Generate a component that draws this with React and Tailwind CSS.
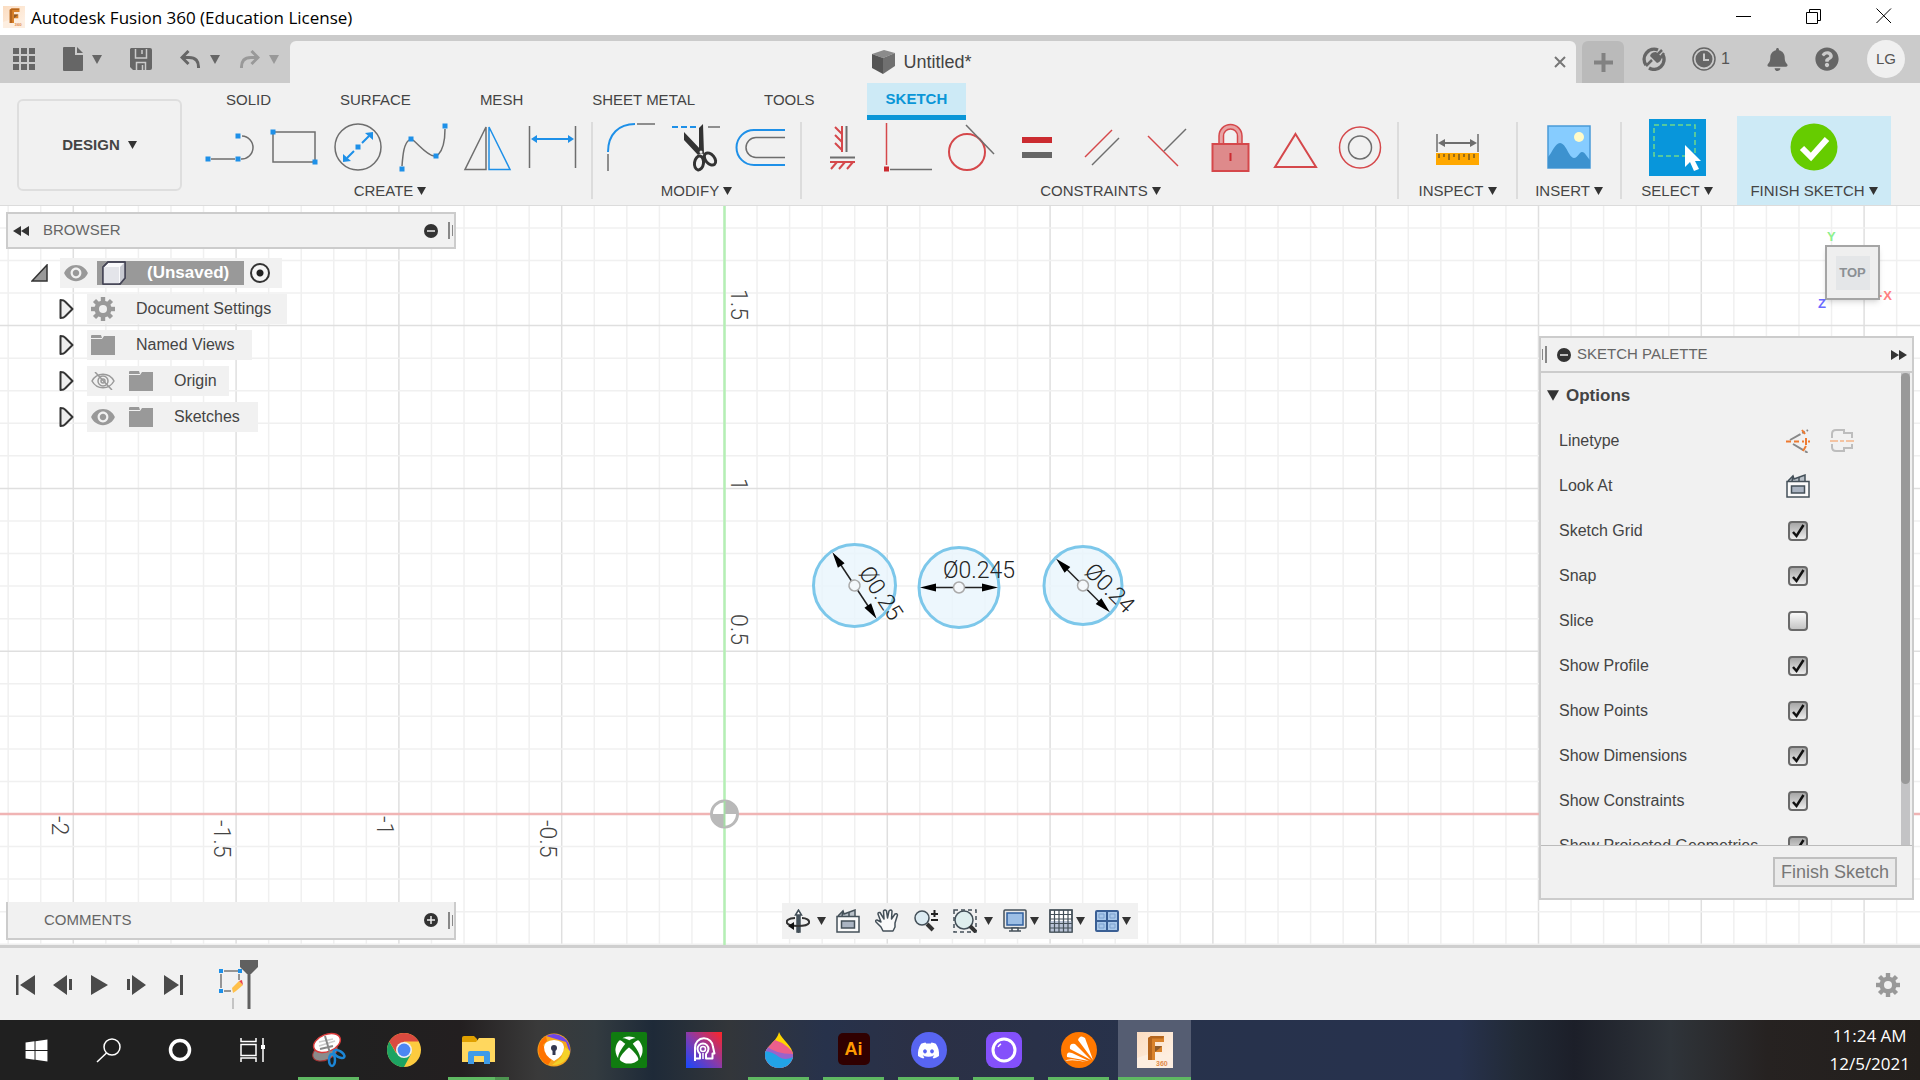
import React from "react";
import { FaWindows, FaXbox, FaDiscord, FaBell, FaQuestionCircle, FaRegHandPaper } from "react-icons/fa";
import { MdVisibility } from "react-icons/md";

const BLUE = "#1e90e8";
const RED = "#d5484b";
const DARK = "#6e6e6e";

function Caret({ className = "text-[#333]", size = 9 }) {
  return (
    <svg width={size} height={size - 1} viewBox="0 0 9 8" className={className} aria-hidden="true">
      <path d="M0 0H9L4.5 8Z" fill="currentColor" />
    </svg>
  );
}

function Gear({ size = 24 }) {
  return (
    <svg width={size} height={size} viewBox="0 0 24 24" fill="#999" aria-hidden="true">
      {[0, 45, 90, 135].map((a) => (
        <rect key={a} x="9.8" y="0" width="4.4" height="24" transform={`rotate(${a} 12 12)`} />
      ))}
      <circle cx="12" cy="12" r="8.6" />
      <circle cx="12" cy="12" r="4" fill="#f0f0f0" />
    </svg>
  );
}

/* ---------- title bar ---------- */

function FusionMark({ size }) {
  return (
    <svg width={size} height={size} viewBox="0 0 36 36" aria-hidden="true">
      <defs>
        <linearGradient id="fbg" x1="0" y1="0" x2="1" y2="1">
          <stop offset="0" stopColor="#fbdcc0" />
          <stop offset="1" stopColor="#fff4ea" />
        </linearGradient>
      </defs>
      <rect width="36" height="36" fill="url(#fbg)" />
      <path d="M0 26L18 20L36 26V36H0Z" fill="#fdeee0" />
      <path d="M11 6L14 4H27V10H18V14H25V20H18V28H11Z" fill="#d9822b" />
      <path d="M11 6L14 4H27L26 6.500H15V28H11Z" fill="#b5651d" />
      <path d="M18 14H25L23 16L18 20Z" fill="#8d5a2b" />
      <text x="19" y="33.500" fontSize="7" fontWeight="700" fill="#e08a4a" fontFamily="Liberation Sans, sans-serif">360</text>
    </svg>
  );
}

function TitleBar() {
  return (
    <header className="flex h-[35px] items-start bg-white pl-[3px] text-black">
      <div className="mt-[6px]"><FusionMark size={22} /></div>
      <h1 className="ml-[6px] mt-[6px] flex-1 font-['Open_Sans','Noto_Sans',sans-serif] text-[17px] leading-6">
        Autodesk Fusion 360 (Education License)
      </h1>
      <div className="flex h-8 items-center gap-6 pr-[13px]">
        <button aria-label="Minimize" className="grid w-[46px] place-items-center">
          <svg width="16" height="16"><path d="M0 8.500H15" stroke="#000" /></svg>
        </button>
        <button aria-label="Restore" className="grid w-[46px] place-items-center">
          <svg width="16" height="16" fill="none" stroke="#000"><path d="M.5 4.500H11.500V15.500H.5Z M3.500 4V1.500H14.500V12.500H12" /></svg>
        </button>
        <button aria-label="Close" className="grid w-[46px] place-items-center">
          <svg width="16" height="16" stroke="#000"><path d="M.5 .5L15 15M15 .5L.5 15" /></svg>
        </button>
      </div>
    </header>
  );
}

/* ---------- tab strip ---------- */

function TabStrip() {
  return (
    <div className="flex h-12 bg-[#cbcbcb] text-[#666]">
      <div className="flex w-[290px] shrink-0 items-center pl-[13px]">
        <button aria-label="Data panel">
          <svg width="22" height="22" fill="currentColor">
            {[0, 8, 16].map((x) => [0, 8, 16].map((y) => <rect key={x + "-" + y} x={x} y={y} width="6" height="6" />))}
          </svg>
        </button>
        <button aria-label="File" className="ml-7 flex items-center gap-[9px]">
          <svg width="20" height="24" fill="currentColor"><path d="M0 1Q0 0 1 0H12V8H20V23Q20 24 19 24H1Q0 24 0 23Z" /><path d="M14 0L20 6H14Z" /></svg>
          <Caret className="text-[#666]" size={10} />
        </button>
        <button aria-label="Save" className="ml-7">
          <svg width="22" height="22"><path d="M1 0H20Q22 0 22 2V20Q22 22 20 22H3L0 19V1Z" fill="currentColor" /><path d="M5.500 1V10H16.500V1M12 2V6M6.500 22V14.500H15.500V22M12.500 17V22" fill="none" stroke="#cbcbcb" strokeWidth="1.500" /></svg>
        </button>
        <button aria-label="Undo" className="ml-7 flex items-center gap-[9px]">
          <svg width="21" height="18" fill="none" stroke="currentColor" strokeWidth="3"><path d="M8.500 1L2 7.500L8.500 14M2 7.500H9Q19 7.500 18.500 18" /></svg>
          <Caret className="text-[#666]" size={10} />
        </button>
        <button aria-label="Redo" className="ml-[19px] flex items-center gap-[9px] text-[#999]">
          <svg width="21" height="18" fill="none" stroke="currentColor" strokeWidth="3"><path d="M12.500 1L19 7.500L12.500 14M19 7.500H12Q2 7.500 2.500 18" /></svg>
          <Caret className="text-[#999]" size={10} />
        </button>
      </div>
      <div className="mt-[6px] flex flex-1 items-center rounded-t-md bg-[#f1f1f1]">
        <div className="flex flex-1 items-center justify-center gap-[7px] text-lg text-[#444]">
          <svg width="25" height="24" viewBox="0 0 25 24"><path d="M1 4L13 0L24 3L12 8Z" fill="#8b8b8b" /><path d="M1 4L12 8V24L1 18Z" fill="#555" /><path d="M12 8L24 3V16L12 24Z" fill="#707070" /></svg>
          Untitled*
        </div>
        <button aria-label="Close document" className="mr-[9px] grid h-6 w-[14px] place-items-center">
          <svg width="12" height="12" stroke="#777" strokeWidth="2"><path d="M1 1L11 11M11 1L1 11" /></svg>
        </button>
      </div>
      <button aria-label="New design" className="ml-[6px] mt-[6px] grid w-[42px] place-items-center rounded-t-md bg-[#bababa]">
        <svg width="19" height="19" stroke="#828282" strokeWidth="4"><path d="M9.500 0V19M0 9.500H19" /></svg>
      </button>
      <div className="flex w-[296px] shrink-0 items-center pl-[18px]">
        <button aria-label="Extensions">
          <svg width="24" height="24" fill="none" stroke="currentColor"><path d="M4 18A10 10 0 0 1 16 3M21 8A10 10 0 0 1 7 21" strokeWidth="3.500" /><path d="M4 19L10 13" strokeWidth="2.500" /><path d="M8 9L15 16Q19 15 20 10L14 5Q9 5 8 9Z" fill="currentColor" stroke="none" /><path d="M15 8L20 3M18 11L22 6" strokeWidth="2.500" /></svg>
        </button>
        <button className="ml-[26px] flex items-center gap-1 text-base text-[#555]">
          <svg width="25" height="24"><circle cx="12" cy="12" r="11" fill="none" stroke="#666" strokeWidth="1.500" /><circle cx="12" cy="12" r="8.500" fill="#666" /><path d="M12 6.500V13H17" stroke="#cbcbcb" strokeWidth="2" fill="none" /></svg>
          1
        </button>
        <button aria-label="Notifications" className="ml-9"><FaBell size={23} /></button>
        <button aria-label="Help" className="ml-[26px]"><FaQuestionCircle size={24} /></button>
        <button className="ml-7 grid size-[38px] place-items-center rounded-full bg-[#f0f0f0] text-[15px] text-[#555]">LG</button>
      </div>
    </div>
  );
}

/* ---------- ribbon ---------- */

function Dot({ x, y }) {
  return <rect x={x - 2.5} y={y - 2.5} width="5" height="5" fill={BLUE} stroke="none" />;
}

const createIcons = {
  Line: <><path d="M9 36H33M39 36A11.500 11.500 0 0 0 40 13" stroke={DARK} /><Dot x={6} y={36} /><Dot x={36} y={36} /><Dot x={36} y={13} /></>,
  Rectangle: <><rect x="6" y="9" width="42" height="30" stroke={DARK} /><Dot x={6} y={9} /><Dot x={48} y={39} /></>,
  Circle: <><circle cx="26" cy="24" r="23" stroke={DARK} /><path d="M30 20L37 13M22 28L15 35" stroke={BLUE} strokeWidth="2" /><path d="M41 9V17L33 10ZM11 39V31L19 38Z" fill={BLUE} /><Dot x={26} y={24} /></>,
  Spline: <><path d="M5 43C6 30 7 21 12 17M16 17C24 24 30 32 37 33M41 32C47 26 48 16 48 6" stroke={DARK} /><Dot x={5} y={46} /><Dot x={14} y={16} /><Dot x={39} y={33} /><Dot x={48} y={3} /></>,
  Mirror: <><path d="M24 4V46.500H3Z" stroke={DARK} /><path d="M27 4V46.500H48Z" stroke={BLUE} /></>,
  "Sketch Dimension": <><path d="M2.500 3V45M48.500 3V45" stroke={DARK} /><path d="M8 16H43" stroke={BLUE} strokeWidth="2" /><path d="M4 16L10 12V20ZM47 16L41 12V20Z" fill={BLUE} /></>,
};

const modifyIcons = {
  Fillet: <><path d="M2 31V48M31 1H49" stroke={DARK} /><path d="M2 29C2 11 13 1 29 1" stroke={BLUE} strokeWidth="2" /></>,
  Trim: <><path d="M1 4H26" stroke={BLUE} strokeWidth="2" strokeDasharray="6 3" /><path d="M37 4H49" stroke={DARK} /><path d="M13 9V17L27 32L32 29ZM32 1L28 5V30L33 31Z" fill="#333" /><ellipse cx="28" cy="40" rx="4.500" ry="7" transform="rotate(8 28 40)" stroke="#333" strokeWidth="3" /><ellipse cx="39" cy="36" rx="4.500" ry="7" transform="rotate(-40 39 36)" stroke="#333" strokeWidth="3" /><circle cx="30" cy="29" r="1.500" fill="#eee" /></>,
  Offset: <><path d="M49 7H18A17.500 17.500 0 0 0 18 42H49" stroke={BLUE} strokeWidth="2" /><path d="M49 14.500H20A10 10 0 0 0 20 34.500H49" stroke={DARK} /></>,
};

const constraintIcons = {
  "Horizontal/Vertical": <><path d="M27 3V29M15 39H40" stroke={RED} strokeWidth="2" /><path d="M31.500 3V29M15 34.500H40" stroke={DARK} strokeWidth="2" /><path d="M27 11L20 4M27 19L20 12M27 27L20 20M22 39L16 46M30 39L24 46M38 39L32 46" stroke={RED} strokeWidth="2" /></>,
  Coincident: <><path d="M6.500 0V42" stroke={RED} /><rect x="4" y="43.500" width="5" height="5" fill="#cb2b30" /><path d="M10 46.500H52" stroke={DARK} /></>,
  Tangent: <><circle cx="22" cy="29" r="18" stroke={RED} strokeWidth="2" /><path d="M21 2L49 31" stroke={DARK} /></>,
  Equal: <><rect x="12" y="14" width="30" height="6" fill="#cb2b30" /><rect x="12" y="29" width="30" height="6" fill="#666" /></>,
  Parallel: <><path d="M10 34L37 7" stroke={RED} /><path d="M17 42L44 15" stroke={DARK} /></>,
  Perpendicular: <><path d="M8 13L38 43" stroke={RED} /><path d="M24 28L46 6" stroke={DARK} /></>,
  "Fix/UnFix": <><path d="M14 21V13A11.500 11.500 0 0 1 37 13V21H32.500V13A7 7 0 0 0 18.500 13V21Z" fill="#e8a4a5" stroke={RED} /><rect x="7.500" y="21" width="36" height="27" fill="#de8a8b" stroke={RED} strokeWidth="2" /><path d="M25.500 30V38" stroke="#cb2b30" strokeWidth="2" /></>,
  MidPoint: <path d="M25.500 11L46 44H5Z" stroke={RED} strokeWidth="2" />,
  Concentric: <><circle cx="25" cy="24.500" r="20.500" stroke={RED} /><circle cx="25" cy="24.500" r="11.500" stroke={DARK} /></>,
};

function MenuLabel({ children }) {
  return (
    <button className="flex h-7 items-center gap-1 pb-px text-[15px] leading-none whitespace-nowrap text-[#444]">
      {children}
      <Caret />
    </button>
  );
}

function ToolGroup({ label, icons }) {
  return (
    <section className="flex flex-col items-center">
      <div className="flex pb-[6px]">
        {Object.entries(icons).map(([name, art]) => (
          <button key={name} aria-label={name} className="grid h-12 w-[65px] place-items-center">
            <svg width="52" height="48" fill="none" strokeWidth="1.500" className="overflow-visible">{art}</svg>
          </button>
        ))}
      </div>
      <MenuLabel>{label}</MenuLabel>
    </section>
  );
}

function Divider() {
  return <div className="mb-[6px] h-[77px] w-[2px] shrink-0 bg-[#dcdcdc]" />;
}

function Ribbon() {
  const tabs = ["SOLID", "SURFACE", "MESH", "SHEET METAL", "TOOLS"];
  return (
    <div className="flex h-[123px] items-end border-b border-[#dcdcdc] bg-[#f1f1f1] text-[#444]">
      <button className="mb-[14px] ml-[17px] mr-[13px] flex h-[92px] w-[165px] shrink-0 items-center justify-center gap-2 rounded-md border-2 border-[#dedede] text-[15px] font-bold text-[#444]">
        DESIGN <Caret />
      </button>
      <div className="flex h-full flex-col justify-between">
        <nav className="flex h-[37px] items-start gap-[35px] pl-[14px] text-[15px]">
          {tabs.map((t) => (
            <button key={t} className="px-[17px] leading-[34px]">{t}</button>
          ))}
          <button className="border-b-[5px] border-[#0a96d7] bg-[#cdeaf6] px-[19px] font-bold leading-[32px] text-[#0a96d7]">SKETCH</button>
        </nav>
        <div className="flex items-end">
          <ToolGroup label="CREATE" icons={createIcons} />
          <div className="px-[6px]"><Divider /></div>
          <ToolGroup label="MODIFY" icons={modifyIcons} />
          <div className="px-[6px]"><Divider /></div>
          <ToolGroup label="CONSTRAINTS" icons={constraintIcons} />
        </div>
      </div>
      <div className="pl-1"><Divider /></div>
      <section className="flex w-[117px] flex-col items-center">
        <button aria-label="Measure" className="mb-[10px]">
          <svg width="43" height="33" className="overflow-visible"><path d="M1 0V18M42 0V18" stroke={DARK} strokeWidth="1.500" /><path d="M5 9H38" stroke={DARK} strokeWidth="2" /><path d="M2 9L9 5V13ZM41 9L34 5V13Z" fill={DARK} /><rect x="0" y="19" width="43" height="12" fill="#ffa800" /><path d="M3 20V24M8 20V23M13 20V26M18 20V23M23 20V26M28 20V23M33 20V26M38 20V24" stroke="#7a5a20" strokeWidth="1.500" /></svg>
        </button>
        <MenuLabel>INSPECT</MenuLabel>
      </section>
      <Divider />
      <section className="flex w-[102px] flex-col items-center">
        <button aria-label="Insert image" className="mb-2">
          <svg width="44" height="44"><rect x="1" y="1" width="42" height="42" fill="#86ccff" stroke="#4a9ad8" strokeWidth="1.500" /><path d="M1 32C5 28 8 18 13 18C19 18 22 33 27 33C31 33 32 27 35 27C38 27 40 32 43 35V43H1Z" fill="#3d92cf" /><circle cx="32" cy="12" r="5" fill="#fffbc8" /></svg>
        </button>
        <MenuLabel>INSERT</MenuLabel>
      </section>
      <Divider />
      <section className="mr-[5px] flex w-[110px] flex-col items-center">
        <button aria-label="Select" className="mb-px bg-[#0896db]">
          <svg width="57" height="57"><rect x="5" y="6" width="41" height="31" fill="none" stroke="#6fd98a" strokeWidth="1.500" strokeDasharray="5 3" /><path d="M36 26V48L41 43L45 52L50 50L46 42H52Z" fill="#fff" /></svg>
        </button>
        <MenuLabel>SELECT</MenuLabel>
      </section>
      <section className="flex h-[89px] w-[154px] flex-col items-center justify-end bg-[#cdeaf6]">
        <button aria-label="Finish sketch" className="mb-[6px]">
          <svg width="48" height="48"><circle cx="24" cy="24" r="23.500" fill="#66cc00" /><path d="M12 25L21 34L37 16" fill="none" stroke="#fff" strokeWidth="6" /></svg>
        </button>
        <MenuLabel>FINISH SKETCH</MenuLabel>
      </section>
    </div>
  );
}

/* ---------- sketch drawing ---------- */

const STEP = 32.56;
const OX = 724.5;
const OY = 814;

function Dimension({ cx, cy, r, angle, label, tx, ty }) {
  return (
    <g>
      <circle cx={cx} cy={cy} r={r} fill="#e9f5fc" fillOpacity="0.8" stroke="#7cc7ea" strokeWidth="3" />
      <g transform={`translate(${cx} ${cy}) rotate(${angle})`}>
        <path d={`M${-r + 8} 0H${r - 8}`} stroke="#222" strokeWidth="1.500" />
        <path d={`M${-r + 1} 0L${-r + 17} -4V4ZM${r - 1} 0L${r - 17} -4V4Z`} fill="#000" />
        <circle r="5.500" fill="#f4f8fb" stroke="#aaa" strokeWidth="1.500" />
      </g>
      <text transform={`translate(${tx} ${ty}) rotate(${angle})`} textAnchor="middle" y="8" fontSize="23" fontWeight="300" fill="#222">{label}</text>
    </g>
  );
}

function AxisLabel({ x, y, children }) {
  return <text transform={`translate(${x} ${y}) rotate(90)`} fontSize="23" fontWeight="300" fill="#444">{children}</text>;
}

function SketchCanvas() {
  const xs = Array.from({ length: 110 }, (_, i) => i - 22);
  const ys = Array.from({ length: 70 }, (_, i) => i - 18);
  return (
    <svg className="absolute inset-0 size-full bg-white font-[Roboto,'Liberation_Sans',sans-serif]" aria-label="Sketch canvas">
      <g transform="translate(0 -206)">
        {xs.map((i) => <path key={i} d={`M${OX + i * STEP} 0V3000`} stroke={i % 5 ? "#f0f0f0" : "#dfdfdf"} strokeWidth="1.500" />)}
        {ys.map((i) => <path key={i} d={`M0 ${OY + i * STEP}H5000`} stroke={i % 5 ? "#f0f0f0" : "#dfdfdf"} strokeWidth="1.500" />)}
        <path d={`M0 ${OY}H5000`} stroke="#f0b4b4" strokeWidth="2.500" />
        <path d={`M${OX} 0V3000`} stroke="#b4efb4" strokeWidth="2.500" />
        <AxisLabel x={731} y={289}>1.5</AxisLabel>
        <AxisLabel x={731} y={478}>1</AxisLabel>
        <AxisLabel x={731} y={614}>0.5</AxisLabel>
        <AxisLabel x={52} y={816}>-2</AxisLabel>
        <AxisLabel x={214} y={820}>-1.5</AxisLabel>
        <AxisLabel x={377} y={816}>-1</AxisLabel>
        <AxisLabel x={540} y={820}>-0.5</AxisLabel>
        <circle cx={OX} cy={OY} r="13" fill="#fff" stroke="#b9b9b9" strokeWidth="3" />
        <path d={`M${OX} ${OY}V${OY - 13}A13 13 0 0 1 ${OX + 13} ${OY}ZM${OX} ${OY}V${OY + 13}A13 13 0 0 1 ${OX - 13} ${OY}Z`} fill="#b9b9b9" />
        <path d={`M${OX} ${OY - 13}V${OY + 13}`} stroke="#a4dca4" strokeWidth="2" />
        <Dimension cx={854.5} cy={585.5} r={41} angle={56.5} label="Ø0.25" tx={881} ty={593} />
        <Dimension cx={959} cy={587.5} r={40} angle={0} label="Ø0.245" tx={979} ty={570} />
        <Dimension cx={1083} cy={585.5} r={39} angle={45} label="Ø0.24" tx={1110} ty={588} />
      </g>
    </svg>
  );
}

/* ---------- browser ---------- */

function MinusPlus({ plus }) {
  return (
    <svg width="14" height="14"><circle cx="7" cy="7" r="7" fill="#333" /><path d={plus ? "M3 7H11M7 3V11" : "M3 7H11"} stroke="#eee" strokeWidth="1.500" /></svg>
  );
}

function Grip() {
  return <span className="flex items-center gap-[2px]"><span className="h-[17px] w-[2px] bg-[#888]" /><span className="h-[11px] w-px bg-[#888]" /></span>;
}

function Folder() {
  return <svg width="24" height="20" fill="#999"><path d="M0 1Q0 0 1 0H10L11 3H0ZM0 4H11L13 1H24V20H0Z" /></svg>;
}

function Eye() {
  return <MdVisibility size={26} color="#999" className="-mx-px" />;
}

function EyeOff() {
  return (
    <svg width="24" height="18" fill="none" stroke="#999" strokeWidth="1.500"><path d="M1 9C6 0 18 0 23 9C18 18 6 18 1 9ZM4 0L21 18" /><circle cx="12" cy="9" r="5" /><circle cx="12" cy="9" r="2" /></svg>
  );
}

function Expander() {
  return <svg width="15" height="20"><path d="M1.500 1Q5 1 6 2.500L13.500 10L6 17.500Q5 19 1.500 19Z" fill="#eee" stroke="#333" strokeWidth="2" strokeLinejoin="round" /></svg>;
}

function Browser() {
  const rows = [
    { label: "Document Settings", icons: <Gear />, pr: "pr-4" },
    { label: "Named Views", icons: <Folder />, pr: "pr-[18px]" },
    { label: "Origin", icons: <><EyeOff /><Folder /></>, pr: "pr-3" },
    { label: "Sketches", icons: <><Eye /><Folder /></>, pr: "pr-[18px]" },
  ];
  return (
    <div>
      <div className="flex h-[37px] w-[450px] items-center border-2 border-[#ccc] bg-[#f1f1f1] pl-[5px] pr-px text-[15px] text-[#666]">
        <button aria-label="Collapse browser"><svg width="16" height="10" fill="#333"><path d="M0 5L8 0V10ZM8 5L16 0V10Z" /></svg></button>
        <h2 className="ml-[14px] flex-1">BROWSER</h2>
        <button aria-label="Minimize browser" className="mr-[10px]"><MinusPlus /></button>
        <Grip />
      </div>
      <ul className="mt-[9px] flex flex-col gap-[6px] text-base text-[#444]">
        <li className="flex h-[30px] items-center pl-[25px]">
          <button aria-label="Collapse document" className="mr-3">
            <svg width="17" height="18"><path d="M1 17L16 1V17Z" fill="#999" stroke="#333" strokeWidth="1.500" /></svg>
          </button>
          <span className="flex h-full items-center bg-[#f1f1f1] pl-1 pr-3">
            <Eye />
            <span className="ml-[9px] flex h-6 items-center bg-[#999] pl-[5px] pr-[15px] text-[17px] font-bold text-white">
              <svg width="24" height="24" className="mr-[21px]" stroke="#445" strokeWidth="1.500" strokeLinejoin="round"><path d="M1 6L6 1H23V17L18 23H1Z" fill="#fafafc" /><path d="M1 6H17V23H1Z" fill="#e4e5ea" stroke="none" /><path d="M18 6L23 1V17L18 23Z" fill="#c8cad2" stroke="none" /><path d="M1 6L6 1H23V17L18 23H1Z" fill="none" /></svg>
              (Unsaved)
            </span>
            <input type="radio" defaultChecked aria-label="Activate component" className="ml-[6px] size-5 appearance-none rounded-full border-2 border-[#333] bg-[radial-gradient(circle,#222_3px,#f6f6f6_4px)]" />
          </span>
        </li>
        {rows.map((r) => (
          <li key={r.label} className="flex h-[30px] items-center pl-[53px]">
            <button aria-label={"Expand " + r.label} className="mr-[13px]"><Expander /></button>
            <span className={"flex h-full items-center bg-[#f1f1f1] pl-1 " + r.pr}>
              <span className="mr-[21px] flex items-center gap-[14px]">{r.icons}</span>
              {r.label}
            </span>
          </li>
        ))}
      </ul>
    </div>
  );
}

function Comments() {
  return (
    <div className="flex h-[38px] w-[450px] items-center border-2 border-t-0 border-[#ccc] bg-[#f1f1f1] pl-9 pr-px text-[15px] text-[#666]">
      <h2 className="flex-1">COMMENTS</h2>
      <button aria-label="Open comments" className="mr-[10px]"><MinusPlus plus /></button>
      <Grip />
    </div>
  );
}

/* ---------- navigation bar ---------- */

function LookAtIcon() {
  return (
    <svg width="24" height="24" fill="none" stroke="#445059" strokeWidth="1.500"><path d="M2 7L7 2L8 5L19 1V7" fill="#b8c0c8" /><path d="M7 2L6 7M13 3V7" /><rect x="1" y="7.500" width="22" height="15.500" fill="#fafafa" /><rect x="5.500" y="12" width="13" height="7" fill="#aab4c2" /></svg>
  );
}

function NavBar() {
  const S = { width: 24, height: 24, fill: "none", stroke: "#445059", strokeWidth: 1.5 };
  const items = [
    { name: "Orbit", caret: true, wide: true, art: <svg {...S}><path d="M12.500 24V7M9.500 6L12.500 1L15.500 6ZM11 7H14V23H11Z" fill="#fff" /><path d="M9 9C2 9 0 12 1 14C3 18 21 18 23 14C24 11 20 9 16 9" stroke="#333" strokeWidth="2" /><path d="M8 13V21L2 17Z" fill="#111" stroke="none" /></svg> },
    { name: "Look at", art: <LookAtIcon /> },
    { name: "Pan", art: <svg {...S}><path d="M8 22L6 18L1 13Q0 11 2 11L6 13L3 5Q3 3 5 3.500L9 10L8.500 2Q10 0 11.500 2L12.500 9L14 2Q16 0 17 2L16.500 10L20 5Q22 4 22.500 6L20 14V18L18 22Z" fill="#fafafa" strokeLinejoin="round" /></svg> },
    { name: "Zoom", art: <svg {...S}><circle cx="8" cy="9" r="7" fill="#dcebf2" /><path d="M13 15L19 21" stroke="#333" strokeWidth="4" /><path d="M17 5H24M20.500 1V8M17 11H24" stroke="#222" strokeWidth="2" /></svg> },
    { name: "Fit", caret: true, wide: true, art: <svg {...S}><path d="M1 1H23V23H1Z" strokeDasharray="4 3" /><circle cx="11" cy="11" r="9" fill="#dfeeee" /><path d="M17 17L23 23" stroke="#333" strokeWidth="4" /></svg> },
    { name: "Display settings", caret: true, art: <svg {...S}><rect x="1" y="1" width="22" height="18" rx="1" fill="#e8e8e8" /><rect x="4" y="4" width="16" height="12" fill="#9dbfe6" stroke="#2f5f9e" /><path d="M9 19H15V22H18H6H9Z" fill="#fff" /></svg> },
    { name: "Grid and snaps", caret: true, art: <svg {...S}><rect x="1" y="1" width="22" height="22" fill="#fff" /><rect x="1" y="12" width="22" height="11" fill="#b9c3d6" stroke="none" /><path d="M5.500 1V23M10 1V23M14.500 1V23M19 1V23M1 5.500H23M1 10H23M1 14.500H23M1 19H23M1 1H23V23H1Z" strokeWidth="1.200" /></svg> },
    { name: "Viewports", caret: true, art: <svg {...S}><rect x="1" y="2" width="22" height="20" rx="1" fill="#a9c8ea" stroke="#3a5f94" strokeWidth="2" /><path d="M12 2V22M1 12H23" stroke="#3a5f94" strokeWidth="2" /><path d="M4 5H9V9H4ZM15 5H20V9H15ZM4 15H9V19H4ZM15 15H20V19H15Z" stroke="#7ea3d0" strokeWidth="1" /></svg> },
  ];
  return (
    <div className="flex h-9 items-center gap-[10px] bg-[#f1f1f1] pl-1 pr-[7px]">
      {items.map((i) => (
        <button key={i.name} aria-label={i.name} className={"flex items-center " + (i.wide ? "gap-[7px]" : i.caret ? "gap-[3px]" : "pr-[5px]")}>
          {i.art}
          {i.caret && <Caret />}
        </button>
      ))}
    </div>
  );
}

/* ---------- view cube and palette ---------- */

function ViewCube() {
  return (
    <div className="relative mr-10 mt-[39px] grid size-[55px] place-items-center border-2 border-[#a5a5a5] bg-[#efefef] shadow-md">
      <button className="grid size-[34px] place-items-center bg-[#e4e6e8] text-[13px] font-bold text-[#8b9094]">TOP</button>
      <span className="absolute -top-5 left-0 text-[13px] font-bold text-[#8df08d]">Y</span>
      <span className="absolute -bottom-[7px] -right-[14px] text-[13px] font-bold text-[#ff8080]">·X</span>
      <span className="absolute -bottom-[15px] -left-[9px] text-[13px] font-bold text-[#6a6aff]">Z</span>
    </div>
  );
}

function Check({ id, on }) {
  return (
    <span className="relative size-5">
      <input id={id} type="checkbox" defaultChecked={on} className="peer block size-5 appearance-none rounded-[4px] border-2 border-[#6a6a6a] bg-linear-to-b from-[#fafafa] to-[#c4c4c4] checked:from-[#a6a6a6] checked:to-[#ededed]" />
      <svg width="20" height="20" className="pointer-events-none absolute inset-0 hidden peer-checked:block"><path d="M5 11L8.500 15L15.500 4" fill="none" stroke="#111" strokeWidth="2.500" /></svg>
    </span>
  );
}

function Palette() {
  const opts = [["Sketch Grid", true], ["Snap", true], ["Slice", false], ["Show Profile", true], ["Show Points", true], ["Show Dimensions", true], ["Show Constraints", true], ["Show Projected Geometries", true]];
  return (
    <aside className="mr-[6px] mt-9 w-[375px] border-2 border-[#ccc] bg-[#f1f1f1] text-base text-[#444]">
      <div className="flex h-[35px] items-center border-b-2 border-[#ccc] pl-px pr-[5px] text-[15px] text-[#666]">
        <span className="rotate-180"><Grip /></span>
        <button aria-label="Minimize palette" className="ml-[10px]"><MinusPlus /></button>
        <h2 className="ml-[6px] flex-1">SKETCH PALETTE</h2>
        <button aria-label="Collapse palette"><svg width="16" height="10" fill="#333"><path d="M0 0L8 5L0 10ZM8 0L16 5L8 10Z" /></svg></button>
      </div>
      <div className="flex h-[472px] overflow-hidden">
        <div className="flex-1">
          <button className="flex h-[45px] items-center gap-[7px] pl-[6px] text-[17px] font-bold"><Caret size={12} />Options</button>
          <div className="flex h-[45px] items-center pl-[18px] pr-[47px]">
            <span className="flex-1">Linetype</span>
            <button aria-label="Construction" className="mr-5"><svg width="24" height="24" fill="none" strokeWidth="1.500"><path d="M4 11L22 1M7 15L22 24" stroke="#888" strokeWidth="2" strokeDasharray="12 2 3 2" /><path d="M0 12.500H5M8 12.500H13M16 12.500H18M20 9V16M22 12.500H24M16 1L19 5M17 22L20 17" stroke="#ee7a30" strokeWidth="2" /></svg></button>
            <button aria-label="Centerline"><svg width="24" height="24" fill="none"><path d="M2 9V5Q2 1 6 1H14V4H22V9M2 15V18Q2 22 6 22H14V19H22V15" stroke="#bdbdbd" strokeWidth="2" /><path d="M0 12H8M10 12H14M16 12H24" stroke="#f3c3a2" strokeWidth="2" /></svg></button>
          </div>
          <div className="flex h-[45px] items-center pl-[18px] pr-[91px]">
            <span className="flex-1">Look At</span>
            <button aria-label="Look At"><LookAtIcon /></button>
          </div>
          {opts.map(([label, on]) => (
            <div key={label} className="flex h-[45px] items-center pl-[18px] pr-[93px]">
              <label htmlFor={label} className="flex-1">{label}</label>
              <Check id={label} on={on} />
            </div>
          ))}
        </div>
        <div className="mr-[2px] w-[9px] bg-[#c3c3c5]"><div className="h-[411px] rounded-full bg-[#999]" /></div>
      </div>
      <div className="flex h-[53px] items-center justify-end border-t border-[#bbb] pr-[15px]">
        <button className="h-[30px] border-2 border-[#c0c0c0] bg-[#eaeaea] px-[6px] text-lg leading-none text-[#777]">Finish Sketch</button>
      </div>
    </aside>
  );
}

/* ---------- timeline ---------- */

function Timeline() {
  const steps = [
    ["Go to start", "M0 0H2.500V20H0ZM4 10L19 0V20Z"],
    ["Step back", "M0 10L14 0V20ZM16 4H19V15H16Z"],
    ["Play", "M1 0L18 10L1 20Z"],
    ["Step forward", "M0 4H3V15H0ZM5 0L19 10L5 20Z"],
    ["Go to end", "M0 0L15 10L0 20ZM16 0H19V20H16Z"],
  ];
  return (
    <div className="flex h-[75px] shrink-0 items-center border-t-[3px] border-[#cfcfcf] bg-[#f1f1f1] pl-4 pt-[2px]">
      <div className="flex gap-[17px]">
        {steps.map(([n, d]) => (
          <button key={n} aria-label={n}><svg width="20" height="20" fill="#4a4a4a"><path d={d} /></svg></button>
        ))}
      </div>
      <button aria-label="Sketch1" className="ml-[35px]">
        <svg width="42" height="50" fill="none" className="overflow-visible"><path d="M5 11H20M2 14V28M5 31H12M20 14V20" stroke="#777" strokeWidth="1.500" /><path d="M0 9H4V13H0ZM19 9H23V13H19ZM0 29H4V33H0Z" fill={BLUE} /><path d="M14 33L13 28L20 21L24 25L17 31Z" fill="#ffc04a" /><path d="M20 21L23 20L24 25Z" fill="#e8404a" /><path d="M14 38V49" stroke="#c4c4c4" strokeWidth="2" /><path d="M21 0H39V7L32 14H28L21 7Z" fill="#606060" /><path d="M30 10V49" stroke="#606060" strokeWidth="3" /></svg>
      </button>
      <button aria-label="Timeline settings" className="ml-auto mr-5"><Gear /></button>
    </div>
  );
}

/* ---------- taskbar ---------- */

const apps = [
  { name: "Snipping Tool", open: true, art: <svg width="36" height="36" fill="none"><ellipse cx="14" cy="20" rx="13" ry="8" transform="rotate(-25 14 20)" fill="#8b8b8b" stroke="#a33" /><ellipse cx="16" cy="11" rx="14" ry="8.500" transform="rotate(-22 16 11)" fill="#fff" stroke="#d83a3a" strokeWidth="1.500" /><path d="M8 10L22 7M8 14L24 9" stroke="#ccc" strokeWidth="1.500" /><path d="M14 4L19 21M9 17L22 14" stroke="#888" strokeWidth="2" /><ellipse cx="21" cy="28" rx="3" ry="6" stroke="#1c86d6" strokeWidth="2.500" /><ellipse cx="28" cy="22" rx="3" ry="6" transform="rotate(-60 28 22)" stroke="#1c86d6" strokeWidth="2.500" /></svg> },
  { name: "Chrome", art: <svg width="34" height="34" viewBox="0 0 34 34"><circle cx="17" cy="17" r="17" fill="#fdcb3f" /><path d="M2.300 8.500A17 17 0 0 0 17 34L24 21L17 17L9 20Z" fill="#1da362" /><path d="M2.300 8.500A17 17 0 0 1 31.700 8.500H17L9.500 20Z" fill="#da4a3f" /><circle cx="17" cy="17" r="8" fill="#f1f1f1" /><circle cx="17" cy="17" r="6.400" fill="#4b87f3" /></svg> },
  { name: "File Explorer", open: true, multi: true, art: <svg width="34" height="28"><path d="M0 2Q0 0 2 0H12L15 3V6H0Z" fill="#e0a000" /><path d="M0 6H14L17 2H32Q33 2 33 3V26H0Z" fill="#ffd75e" /><path d="M6 28V17Q6 15 8 15H26Q28 15 28 17V28H22V20H12V28Z" fill="#3f9be8" /></svg> },
  { name: "Secure Browser", art: <svg width="34" height="34" viewBox="0 0 34 34"><circle cx="17" cy="17" r="16.500" fill="#f7a81e" /><path d="M9 3A16.500 16.500 0 0 1 33 20L29 9Z" fill="#6e45e8" /><path d="M9 3A16.500 16.500 0 0 0 11 32L15 26L6 12L10 8Z" fill="#ff7300" /><path d="M15 32A16.500 16.500 0 0 0 33 18L28 14L24 25Z" fill="#f4d22a" /><path d="M17 7Q27 8 27 14Q27 23 17 28Q7 23 7 14Q7 8 17 7Z" fill="#fff" /><circle cx="17" cy="15" r="3" fill="#333850" /><path d="M15.500 15H18.500V22H15.500Z" fill="#333850" /></svg> },
  { name: "Xbox", art: <span className="grid size-9 place-items-center rounded-[2px] bg-[#107c10] text-white"><FaXbox size={28} /></span> },
  { name: "Recall", art: <svg width="36" height="36" fill="none" strokeLinejoin="round"><defs><linearGradient id="hd" x1="0" y1="1" x2="1" y2="0"><stop offset="0" stopColor="#1548ff" /><stop offset=".5" stopColor="#8a3aa8" /><stop offset="1" stopColor="#ff2525" /></linearGradient></defs><rect width="36" height="36" fill="url(#hd)" /><path d="M9 29V15.500A9 9 0 0 1 27 15L28.500 21.500H26.500V26.500H20V22A7 7 0 0 0 22.500 17A5.500 5.500 0 0 0 11.500 17A7 7 0 0 0 14 22V26.500H9" stroke="#fff" strokeWidth="2" /><path d="M17 27V21" stroke="#fff" strokeWidth="1.500" /><circle cx="17" cy="17" r="2.500" stroke="#fff" strokeWidth="1.500" /></svg> },
  { name: "Paint 3D", open: true, art: <svg width="28" height="36"><defs><clipPath id="dr"><path d="M14 0C17 8 28 14 28 23A14 13 0 0 1 0 23C0 14 12 10 14 0Z" /></clipPath></defs><g clipPath="url(#dr)"><rect width="28" height="36" fill="#ffd500" /><path d="M0 8Q14 5 28 20V36H0Z" fill="#ec5f8c" /><path d="M0 13Q10 22 28 22V36H0Z" fill="#9a63cc" /><path d="M0 19Q8 20 14 25Q20 29 28 25V36H0Z" fill="#22a3e6" /></g></svg> },
  { name: "Illustrator", open: true, art: <span className="mb-[2px] grid size-8 place-items-center rounded-[5px] bg-[#300000] text-lg font-bold leading-none text-[#ff9a00]">Ai</span> },
  { name: "Discord", open: true, art: <span className="grid size-9 place-items-center rounded-full bg-[#5865f2] text-white"><FaDiscord size={23} /></span> },
  { name: "Orbit", open: true, art: <svg width="36" height="36"><rect width="36" height="36" rx="9" fill="#8450fb" /><circle cx="18" cy="18" r="11" fill="none" stroke="#fff" strokeWidth="3" /><path d="M12 15Q13 13 15 12" stroke="#fff" strokeWidth="1.500" fill="none" /></svg> },
  { name: "Antivirus", open: true, art: <svg width="36" height="36"><circle cx="18" cy="18" r="18" fill="#ff7800" /><path d="M17 8Q19 2 24 6L32 28Z" fill="#fff" /><path d="M9 17Q8 11 14 12L30 28Z" fill="#fff" /><path d="M6 25Q5 19 11 21L28 29Z" fill="#fff" /><path d="M4 29Q8 25 25 30Q12 27 4 29Z" fill="#fff" /></svg> },
];

function Taskbar() {
  return (
    <footer className="flex h-[60px] shrink-0 bg-[linear-gradient(90deg,#202020_0%,#202020_18%,#231f20_24%,#3a3a3a_28%,#333b40_31%,#1e2a38_34%,#33363a_38%,#27324b_43%,#2b3045_48%,#27324b_60%,#27324e_76%,#222a36_79%,#1c1f29_82%,#2f343a_87%,#262221_92%,#231f1c_100%)] text-white">
      <div className="flex">
        <button aria-label="Start" className="grid w-[72px] place-items-center"><FaWindows size={25} /></button>
        <button aria-label="Search" className="grid w-[72px] place-items-center"><svg width="25" height="25" fill="none" stroke="#fff" strokeWidth="1.500"><circle cx="16" cy="9" r="8" /><path d="M10.500 15L1 24" /></svg></button>
        <button aria-label="Cortana" className="grid w-[72px] place-items-center"><svg width="24" height="24"><circle cx="12" cy="12" r="9.500" fill="none" stroke="#fff" strokeWidth="3.500" /></svg></button>
        <button aria-label="Task view" className="grid w-[72px] place-items-center"><svg width="25" height="24" fill="none" stroke="#fff" strokeWidth="1.500"><path d="M1 0V3.500H16V0M1 6.500H16V17.500H1ZM1 24V20H16V24M23 0V24" /><path d="M21 7H25V11H21Z" fill="#fff" stroke="none" /></svg></button>
      </div>
      <div className="ml-[3px] flex">
        {apps.map((a) => (
          <button key={a.name} aria-label={a.name} className="flex w-[75px] flex-col items-center">
            <span className="grid flex-1 place-items-center">{a.art}</span>
            <span className={a.open ? (a.multi ? "-mt-[3px] h-[3px] w-[61px] border-r-[14px] border-[#4d9450] bg-[#5fb862]" : "-mt-[3px] h-[3px] w-[61px] bg-[#5fb862]") : "hidden"} />
          </button>
        ))}
        <button aria-label="Fusion 360" className="ml-[2px] flex w-[73px] flex-col items-center bg-[#555d72]">
          <span className="grid flex-1 place-items-center"><FusionMark size={36} /></span>
          <span className="-mt-[3px] h-[3px] w-full bg-[#5fb862]" />
        </button>
      </div>
      <div className="ml-auto mr-[10px] flex flex-col items-center justify-center font-['Open_Sans','Noto_Sans',sans-serif] text-[17px] leading-7">
        <span>11:24 AM</span>
        <span>12/5/2021</span>
      </div>
    </footer>
  );
}

export default function App() {
  return (
    <div className="flex min-h-screen flex-col overflow-x-hidden font-['Liberation_Sans',Arial,sans-serif]">
      <TitleBar />
      <TabStrip />
      <Ribbon />
      <main className="relative flex flex-1">
        <SketchCanvas />
        <div className="relative grid flex-1 grid-cols-[1fr_auto_1fr]">
          <div className="flex flex-col justify-between pb-[5px] pl-[6px] pt-[6px]">
            <Browser />
            <Comments />
          </div>
          <div className="flex items-end pb-[6px]"><NavBar /></div>
          <div className="flex flex-col items-end">
            <ViewCube />
            <Palette />
          </div>
        </div>
      </main>
      <Timeline />
      <Taskbar />
    </div>
  );
}
